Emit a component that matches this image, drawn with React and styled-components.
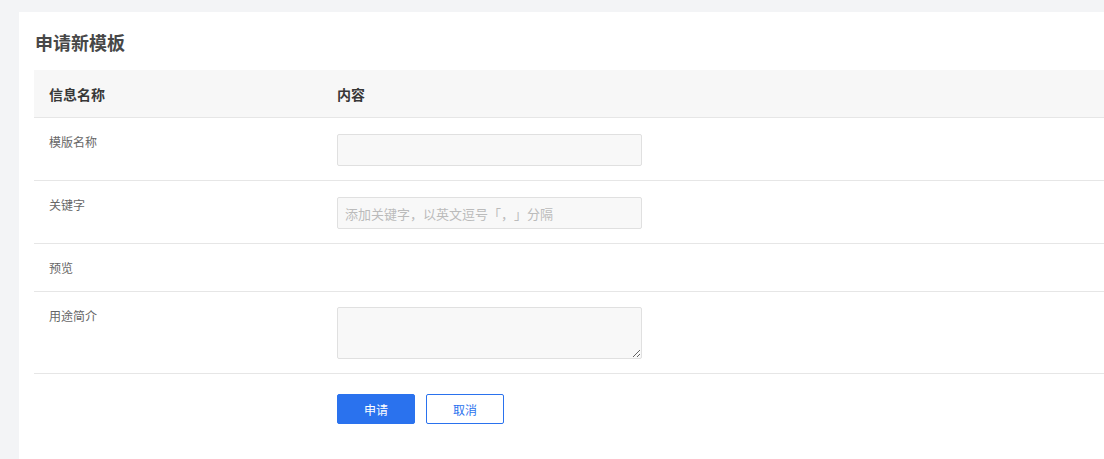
import React from 'react';
import styled, { createGlobalStyle } from 'styled-components';

const GlobalStyle = createGlobalStyle`
    html, body {
        margin: 0;
        padding: 0;
        overflow: hidden;
        background-color: #f3f4f6;
        font-family: "Noto Sans CJK SC", "Noto Sans", sans-serif;
        text-spacing-trim: space-all;
    }
`

const Page = styled.div`
    padding: 12px 0 0 19px;
    height: 459px;
    box-sizing: border-box;
`

const Panel = styled.section`
    background-color: #fff;
    height: 100%;
    padding: 12px 0 0 15px;
    box-sizing: border-box;
`

const Title = styled.h2`
    margin: 0 0 10px 1px;
    font-size: 18px;
    line-height: 36px;
    font-weight: 700;
    color: #474747;
`

const Table = styled.table`
    width: 100%;
    border-collapse: collapse;
    table-layout: fixed;
`

const HeadCell = styled.th`
    width: ${props => props.w || 'auto'};
    height: 47px;
    padding: 0 15px;
    background-color: #f7f7f7;
    border-bottom: 1px solid #e6e6e6;
    text-align: left;
    font-size: 14px;
    font-weight: 700;
    color: #383838;
`

const Row = styled.tr`
    border-bottom: ${props => props.last ? 'none' : '1px solid #e6e6e6'};
`

const Label = styled.td`
    vertical-align: top;
    padding: 14px 15px;
    font-size: 12px;
    line-height: 19px;
    color: #666;
`

const Content = styled.td`
    vertical-align: top;
    padding: ${props => props.top || '16px'} 15px 14px;
`

const Input = styled.input`
    display: block;
    width: 305px;
    height: 32px;
    box-sizing: border-box;
    padding: 0 7px;
    background-color: #f8f8f8;
    border: 1px solid #e0e0e0;
    border-radius: 2px;
    font-family: inherit;
    font-size: 13px;
    color: #333;
    outline: none;
    text-spacing-trim: space-all;

    &::placeholder {
        color: #bbb;
    }
`

const TextArea = styled.textarea`
    display: block;
    width: 305px;
    height: 52px;
    box-sizing: border-box;
    padding: 6px 7px;
    background-color: #f8f8f8;
    border: 1px solid #e0e0e0;
    border-radius: 2px;
    font-family: inherit;
    font-size: 13px;
    outline: none;
    margin-top: -1px;
`

const Actions = styled.div`
    display: flex;
    gap: 11px;
`

const Button = styled.button`
    width: 78px;
    height: 30px;
    border-radius: 2px;
    border: 1px solid #2a72ee;
    background-color: ${props => props.primary ? '#2a72ee' : '#fff'};
    color: ${props => props.primary ? '#fff' : '#2a72ee'};
    font-family: inherit;
    font-size: 12px;
    cursor: pointer;
`

function App() {
    return (
        <>
            <GlobalStyle />
            <Page>
                <Panel>
                    <Title>申请新模板</Title>
                    <Table>
                        <thead>
                            <tr>
                                <HeadCell w="258px">信息名称</HeadCell>
                                <HeadCell>内容</HeadCell>
                            </tr>
                        </thead>
                        <tbody>
                            <Row>
                                <Label>模版名称</Label>
                                <Content><Input /></Content>
                            </Row>
                            <Row>
                                <Label>关键字</Label>
                                <Content>
                                    <Input placeholder="添加关键字，以英文逗号「，」分隔" />
                                </Content>
                            </Row>
                            <Row>
                                <Label>预览</Label>
                                <Content />
                            </Row>
                            <Row>
                                <Label>用途简介</Label>
                                <Content><TextArea /></Content>
                            </Row>
                            <Row last>
                                <Label />
                                <Content top="20px">
                                    <Actions>
                                        <Button primary>申请</Button>
                                        <Button>取消</Button>
                                    </Actions>
                                </Content>
                            </Row>
                        </tbody>
                    </Table>
                </Panel>
            </Page>
        </>
    )
}

export default App;
